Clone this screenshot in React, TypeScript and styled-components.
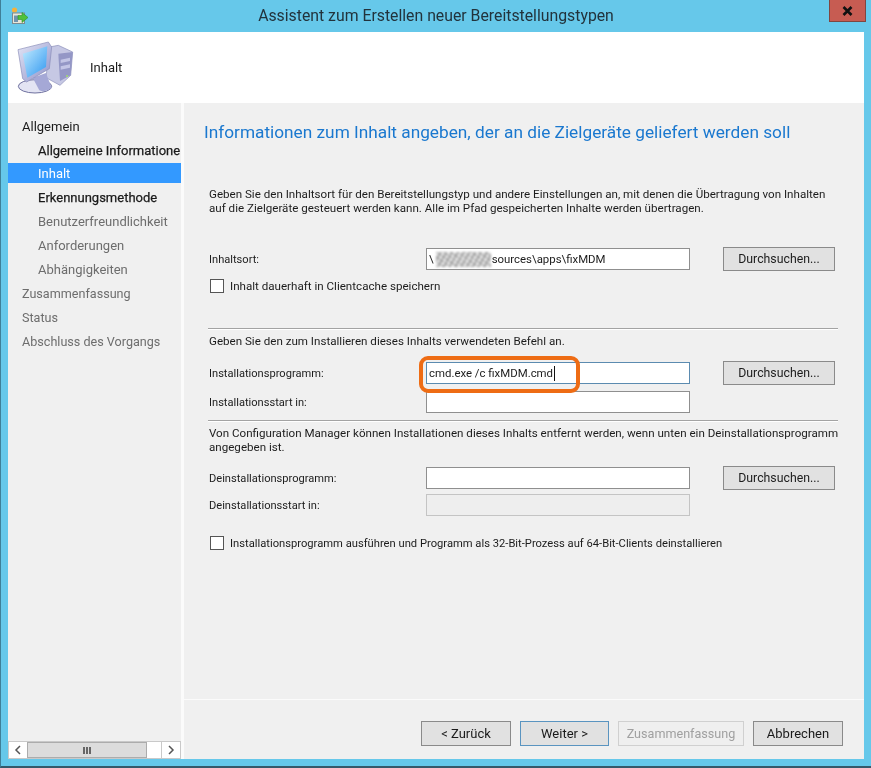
import styled, { createGlobalStyle } from "styled-components";

const GlobalStyle = createGlobalStyle`
  html, body {
    margin: 0;
    padding: 0;
    background: #66c8ea;
  }
  * {
    box-sizing: border-box;
  }
`;

const Window = styled.div`
  width: 871px;
  height: 768px;
  display: flex;
  flex-direction: column;
  padding: 0 7px 7px 7px;
  background: #66c8ea;
  border-left: 1px solid #3f7f98;
  border-bottom: 2px solid #35596a;
  font-family: Roboto, "Noto Sans", sans-serif;
  font-size: 12px;
  color: #1c1c1c;
  filter: blur(0.4px);
  overflow: hidden;
`;

const TitleBar = styled.div`
  height: 32px;
  flex: none;
  display: flex;
  align-items: flex-start;
`;

const TitleIcon = styled.svg`
  width: 18px;
  height: 18px;
  margin: 7px 0 0 3px;
  flex: none;
`;

const TitleText = styled.div`
  flex: 1;
  text-align: center;
  font-size: 15.8px;
  line-height: 31px;
  color: #22333c;
  padding-left: 14px;
`;

const CloseButton = styled.div`
  width: 37px;
  height: 22px;
  margin-right: -2px;
  background: #c75c52;
  border: 1px solid #7f4640;
  border-top: none;
  display: flex;
  align-items: center;
  justify-content: center;
`;

const Header = styled.div`
  height: 71px;
  flex: none;
  background: #fff;
  display: flex;
  align-items: center;
  padding-left: 2px;
`;

const HeaderTitle = styled.div`
  margin-left: 10px;
  font-size: 13px;
`;

const Main = styled.div`
  flex: 1;
  min-height: 0;
  display: flex;
  gap: 3px;
  background: #fbfbfb;
`;

const Sidebar = styled.div`
  width: 173px;
  flex: none;
  display: flex;
  flex-direction: column;
  background: #f0f0f0;
  overflow: hidden;
`;

const NavList = styled.div`
  flex: 1;
  padding-top: 12px;
`;

const NavItem = styled.div<{ $sub?: boolean; $active?: boolean; $tone?: "strong" | "muted" }>`
  height: ${(p) => (p.$active ? "20px" : "24px")};
  margin-bottom: ${(p) => (p.$active ? "3px" : "0")};
  line-height: ${(p) => (p.$active ? "22px" : "24px")};
  padding-left: ${(p) => (p.$sub ? "30px" : "14px")};
  white-space: nowrap;
  font-size: ${(p) => (p.$tone === "muted" && !p.$sub ? "12.6px" : "13px")};
  background: ${(p) => (p.$active ? "#3399ff" : "transparent")};
  color: ${(p) => (p.$active ? "#fff" : p.$tone === "muted" ? "#6d6d6d" : "#1a1a1a")};
  -webkit-text-stroke: ${(p) => (p.$tone === "strong" ? "0.25px #1a1a1a" : "0")};
`;

const ScrollBar = styled.div`
  height: 18px;
  flex: none;
  display: flex;
  background: #fff;
  border: 1px solid #c9c9c9;
`;

const ScrollArrow = styled.div`
  width: 18px;
  flex: none;
  display: flex;
  align-items: center;
  justify-content: center;
  background: #fff;
`;

const ScrollThumb = styled.div`
  width: 120px;
  flex: none;
  background: #dcdcdc;
  border: 1px solid #acacac;
  display: flex;
  align-items: center;
  justify-content: center;
  gap: 1px;
`;

const Grip = styled.span`
  width: 2px;
  height: 7px;
  background: #666;
`;

const ScrollTrack = styled.div`
  flex: 1;
  border-right: 1px solid #c9c9c9;
`;

const Content = styled.div`
  flex: 1;
  min-width: 0;
  display: flex;
  flex-direction: column;
  background: #f0f0f0;
`;

const Form = styled.div`
  flex: 1;
  display: flex;
  flex-direction: column;
  padding: 17px 26px 0 25px;
  position: relative;
`;

const Heading = styled.div`
  margin-left: -5px;
  height: 24px;
  font-size: 17.25px;
  line-height: 24px;
  color: #1a78cf;
  white-space: nowrap;
`;

const Paragraph = styled.div<{ $top: number }>`
  margin-top: ${(p) => p.$top}px;
  font-size: 11.6px;
  line-height: 14px;
  white-space: nowrap;
`;

const Row = styled.div<{ $top: number }>`
  margin-top: ${(p) => p.$top}px;
  height: 24px;
  display: flex;
  align-items: center;
  font-size: 11.1px;
`;

const FieldLabel = styled.div`
  width: 217px;
  flex: none;
`;

const TextInput = styled.div<{ $focused?: boolean; $disabled?: boolean }>`
  width: 264px;
  height: 22px;
  flex: none;
  padding-left: 2px;
  line-height: 20px;
  font-size: 11.4px;
  white-space: nowrap;
  display: flex;
  align-items: center;
  background: ${(p) => (p.$disabled ? "#eeeeee" : "#fff")};
  border: 1px solid ${(p) => (p.$focused ? "#5b8bb0" : p.$disabled ? "#c4c4c4" : "#8f8f8f")};
`;

const Redacted = styled.span`
  width: 55px;
  height: 15px;
  margin-left: 2px;
  margin-right: 1px;
  background:
    repeating-linear-gradient(35deg, rgba(150, 150, 150, 0.7) 0 1px, transparent 1px 4px),
    repeating-linear-gradient(-60deg, rgba(130, 130, 130, 0.6) 0 2px, transparent 2px 5px),
    #e6e6e6;
  filter: blur(0.8px);
`;

const Caret = styled.span`
  width: 1px;
  height: 15px;
  margin-left: 1px;
  background: #111;
`;

const BrowseButton = styled.div`
  width: 112px;
  height: 24px;
  margin-left: 33px;
  flex: none;
  background: #e1e1e1;
  border: 1px solid #8a8a8a;
  display: flex;
  align-items: center;
  justify-content: center;
  font-size: 12.3px;
`;

const CheckRow = styled.div<{ $top: number; $size?: number }>`
  margin-top: ${(p) => p.$top}px;
  height: 16px;
  display: flex;
  align-items: center;
  gap: 6px;
  font-size: ${(p) => p.$size ?? 11.6}px;
  margin-left: 1px;
`;

const CheckBox = styled.span`
  width: 14px;
  height: 14px;
  flex: none;
  background: #fff;
  border: 1px solid #555;
`;

const Rule = styled.div<{ $top: number }>`
  margin-top: ${(p) => p.$top}px;
  height: 1px;
  margin-left: -1px;
  width: 630px;
  background: #a3a3a3;
  box-shadow: 0 1px 0 #fff;
`;

const Highlight = styled.div`
  position: absolute;
  left: 235px;
  top: 253px;
  width: 161px;
  height: 37px;
  border: 4px solid #ee6c14;
  border-radius: 9px;
  pointer-events: none;
`;

const Footer = styled.div`
  height: 60px;
  flex: none;
  border-top: 1px solid #fbfbfb;
  display: flex;
  justify-content: flex-end;
  gap: 9px;
  padding: 21px 21px 0 0;
`;

const WizardButton = styled.div<{ $width: number; $variant?: "default" | "disabled" }>`
  width: ${(p) => p.$width}px;
  height: 25px;
  display: flex;
  align-items: center;
  justify-content: center;
  font-size: ${(p) => (p.$variant === "disabled" ? "12.6px" : "13px")};
  background: ${(p) => (p.$variant === "disabled" ? "#efefef" : "#e1e1e1")};
  color: ${(p) => (p.$variant === "disabled" ? "#a0a0a0" : "#1a1a1a")};
  border: 1px solid
    ${(p) =>
      p.$variant === "disabled" ? "#d0d0d0" : p.$variant === "default" ? "#5a94c0" : "#8a8a8a"};
`;

const ComputerIcon = () => (
  <svg width="70" height="62" viewBox="0 0 210 186">
    <defs>
      <linearGradient id="screen" x1="0" y1="0" x2="1" y2="1">
        <stop offset="0" stopColor="#c4ecff" />
        <stop offset="1" stopColor="#2f97f0" />
      </linearGradient>
      <linearGradient id="bezel" x1="0" y1="0" x2="1" y2="1">
        <stop offset="0" stopColor="#e4e6f6" />
        <stop offset="1" stopColor="#8f92c8" />
      </linearGradient>
    </defs>
    <path d="M118 30 L145 25 L188 45 L182 115 L150 145 L108 122 Z" fill="#c6c8e4" stroke="#8a8cb8" strokeWidth="2" />
    <path d="M145 50 L188 45 L182 115 L150 132 Z" fill="#9497c6" />
    <path d="M152 68 L180 62 V72 L152 78 Z M152 88 L180 82 V92 L152 98 Z" fill="#c3c5e6" />
    <circle cx="171" cy="117" r="3" fill="#9fdc6a" />
    <ellipse cx="75" cy="148" rx="50" ry="20" fill="#e3e4f3" stroke="#6f719f" strokeWidth="3" />
    <path d="M68 122 L108 108 L125 153 Q105 168 88 160 Z" fill="#a5a8d6" />
    <path d="M24 38 L115 15 L125 30 L118 95 L50 135 L38 125 Z" fill="url(#bezel)" stroke="#8a8cb8" strokeWidth="2" />
    <path d="M38 50 L112 28 L108 90 L52 122 Z" fill="url(#screen)" />
  </svg>
);

const AppIcon = () => (
  <TitleIcon viewBox="0 0 18 18">
    <circle cx="3.5" cy="3" r="2.6" fill="#f4b23c" />
    <rect x="1.5" y="6" width="12" height="10.5" fill="#e9e6d8" stroke="#7d8b8f" />
    <rect x="3" y="8.5" width="4" height="6.5" fill="#6f94ad" />
    <path d="M7 8.5 h4 v-3 l6 5 l-6 5 v-3 h-4 Z" fill="#4fc13a" stroke="#2e8f25" strokeWidth="0.6" />
  </TitleIcon>
);

const navItems = [
  { label: "Allgemein" },
  { label: "Allgemeine Informationen", sub: true, tone: "strong" as const },
  { label: "Inhalt", sub: true, active: true },
  { label: "Erkennungsmethode", sub: true, tone: "strong" as const },
  { label: "Benutzerfreundlichkeit", sub: true, tone: "muted" as const },
  { label: "Anforderungen", sub: true, tone: "muted" as const },
  { label: "Abhängigkeiten", sub: true, tone: "muted" as const },
  { label: "Zusammenfassung", tone: "muted" as const },
  { label: "Status", tone: "muted" as const },
  { label: "Abschluss des Vorgangs", tone: "muted" as const },
];

export default function App() {
  return (
    <>
      <GlobalStyle />
      <Window>
        <TitleBar>
          <AppIcon />
          <TitleText>Assistent zum Erstellen neuer Bereitstellungstypen</TitleText>
          <CloseButton>
            <svg width="11" height="10" viewBox="0 0 11 10">
              <path d="M1.5 1 L9.5 9 M9.5 1 L1.5 9" stroke="#111" strokeWidth="2.6" />
            </svg>
          </CloseButton>
        </TitleBar>
        <Header>
          <ComputerIcon />
          <HeaderTitle>Inhalt</HeaderTitle>
        </Header>
        <Main>
          <Sidebar>
            <NavList>
              {navItems.map((item) => (
                <NavItem key={item.label} $sub={item.sub} $active={item.active} $tone={item.tone}>
                  {item.label}
                </NavItem>
              ))}
            </NavList>
            <ScrollBar>
              <ScrollArrow>
                <svg width="8" height="10" viewBox="0 0 8 10">
                  <path d="M6 1 L2 5 L6 9" fill="none" stroke="#555" strokeWidth="1.5" />
                </svg>
              </ScrollArrow>
              <ScrollThumb>
                <Grip />
                <Grip />
                <Grip />
              </ScrollThumb>
              <ScrollTrack />
              <ScrollArrow>
                <svg width="8" height="10" viewBox="0 0 8 10">
                  <path d="M2 1 L6 5 L2 9" fill="none" stroke="#555" strokeWidth="1.5" />
                </svg>
              </ScrollArrow>
            </ScrollBar>
          </Sidebar>
          <Content>
            <Form>
              <Heading>Informationen zum Inhalt angeben, der an die Zielgeräte geliefert werden soll</Heading>
              <Paragraph $top={43}>
                Geben Sie den Inhaltsort für den Bereitstellungstyp und andere Einstellungen an, mit denen die Übertragung von Inhalten
                <br />
                auf die Zielgeräte gesteuert werden kann. Alle im Pfad gespeicherten Inhalte werden übertragen.
              </Paragraph>
              <Row $top={32}>
                <FieldLabel>Inhaltsort:</FieldLabel>
                <TextInput>
                  \<Redacted />
                  sources\apps\fixMDM
                </TextInput>
                <BrowseButton>Durchsuchen...</BrowseButton>
              </Row>
              <CheckRow $top={7}>
                <CheckBox />
                Inhalt dauerhaft in Clientcache speichern
              </CheckRow>
              <Rule $top={34} />
              <Paragraph $top={5}>Geben Sie den zum Installieren dieses Inhalts verwendeten Befehl an.</Paragraph>
              <Row $top={13}>
                <FieldLabel>Installationsprogramm:</FieldLabel>
                <TextInput $focused>
                  cmd.exe /c fixMDM.cmd
                  <Caret />
                </TextInput>
                <BrowseButton>Durchsuchen...</BrowseButton>
              </Row>
              <Row $top={5}>
                <FieldLabel>Installationsstart in:</FieldLabel>
                <TextInput />
              </Row>
              <Rule $top={6} />
              <Paragraph $top={5}>
                Von Configuration Manager können Installationen dieses Inhalts entfernt werden, wenn unten ein Deinstallationsprogramm
                <br />
                angegeben ist.
              </Paragraph>
              <Row $top={12}>
                <FieldLabel>Deinstallationsprogramm:</FieldLabel>
                <TextInput />
                <BrowseButton>Durchsuchen...</BrowseButton>
              </Row>
              <Row $top={3}>
                <FieldLabel>Deinstallationsstart in:</FieldLabel>
                <TextInput $disabled />
              </Row>
              <CheckRow $top={18} $size={11.2}>
                <CheckBox />
                Installationsprogramm ausführen und Programm als 32-Bit-Prozess auf 64-Bit-Clients deinstallieren
              </CheckRow>
              <Highlight />
            </Form>
            <Footer>
              <WizardButton $width={90}>&lt; Zurück</WizardButton>
              <WizardButton $width={89} $variant="default">
                Weiter &gt;
              </WizardButton>
              <WizardButton $width={126} $variant="disabled">
                Zusammenfassung
              </WizardButton>
              <WizardButton $width={90}>Abbrechen</WizardButton>
            </Footer>
          </Content>
        </Main>
      </Window>
    </>
  );
}
